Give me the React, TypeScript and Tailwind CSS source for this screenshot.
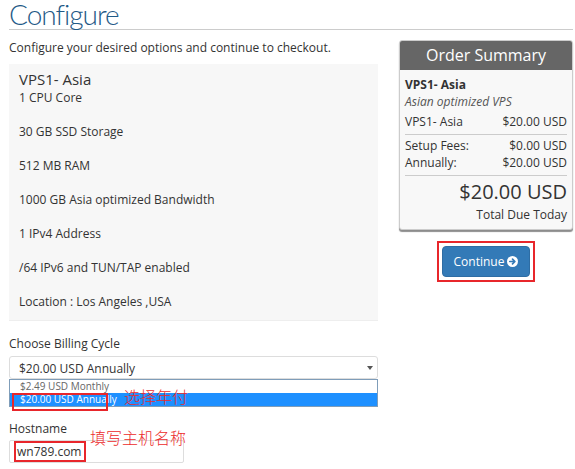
const features = [
  '1 CPU Core',
  '30 GB SSD Storage',
  '512 MB RAM',
  '1000 GB Asia optimized Bandwidth',
  '1 IPv4 Address',
  '/64 IPv6 and TUN/TAP enabled',
  'Location : Los Angeles ,USA',
];

function ArrowCircle() {
  return (
    <svg width="11" height="11" viewBox="0 0 16 16" className="inline-block">
      <circle cx="8" cy="8" r="8" fill="#fff" />
      <path d="M4 8h7M8 4.5 11.5 8 8 11.5" stroke="#337ab7" strokeWidth="2.4" fill="none" strokeLinecap="round" strokeLinejoin="round" />
    </svg>
  );
}

function Note({ children, className }: { children: React.ReactNode; className: string }) {
  return (
    <span
      className={`absolute whitespace-nowrap text-[16px] leading-[16px] font-light text-[#ec2b2b] ${className}`}
      style={{ fontFamily: '"Noto Sans CJK SC", sans-serif' }}
    >
      {children}
    </span>
  );
}

export default function App() {
  return (
    <div className="w-[575px] h-[469px] overflow-hidden bg-white pl-[9px] pr-[2px] text-[12px] leading-[17px] text-[#333]" style={{ fontFamily: '"Open Sans", sans-serif' }}>
      <h1
        className="text-[28px] leading-[28px] pb-[1px] border-b border-[#ccc] font-light text-[#1f5a87] tracking-[-1px]"
        style={{ fontFamily: 'Lato, sans-serif' }}
      >
        Configure
      </h1>

      <div className="flex items-start gap-[21px]">
        {/* left column */}
        <div className="w-[369px] pt-[9px]">
          <p>Configure your desired options and continue to checkout.</p>

          <div className="mt-[8px] bg-[#f7f7f7] border-b border-[#eee] pl-[10px] pt-[5px] pb-[10px]">
            <div className="text-[15px] leading-[20px]">VPS1- Asia</div>
            <div className="flex flex-col gap-[17px]">
              {features.map((f) => (
                <div key={f}>{f}</div>
              ))}
            </div>
          </div>

          <div className="mt-[14px]">Choose Billing Cycle</div>
          <div className="relative mt-[4px]">
            <div className="h-[23px] border border-[#ddd] rounded-[3px] flex items-center justify-between pl-[9px] pr-[4px] pt-[1px]">
              <span>$20.00 USD Annually</span>
              <svg width="6" height="4" viewBox="0 0 6 4">
                <polygon points="0,0 6,0 3,4" fill="#555" />
              </svg>
            </div>
            <div className="absolute left-0 right-0 top-full border border-[#7f9db9] bg-white text-[10px] leading-[13px]">
              <div className="pl-[10px] text-[#666]">$2.49 USD Monthly</div>
              <div className="pl-[10px] bg-[#1e90ff] text-white">$20.00 USD Annually</div>
            </div>
            <div className="absolute left-[3px] top-[37px] w-[96px] h-[18px] border-2 border-[#e8262b]" />
            <Note className="left-[115px] top-[32px]">选择年付</Note>
          </div>

          <div className="mt-[41px] relative">
            <div>Hostname</div>
            <div className="mt-[3px] w-[175px] h-[23px] border border-[#ddd] rounded-[2px] pl-[7px] leading-[21px]">
              wn789.com
            </div>
            <div className="absolute left-[5px] top-[21px] w-[72px] h-[21px] border-2 border-[#e8262b]" />
            <Note className="left-[81px] top-[9px]">填写主机名称</Note>
          </div>
        </div>

        {/* right column */}
        <div className="w-[174px] pt-[10px] flex flex-col items-center">
          <div className="w-full rounded-[3px] border border-[#ccc] shadow-[0_2px_1px_rgba(0,0,0,0.45)] overflow-hidden bg-[#f8f8f8]">
            <div className="h-[29px] bg-[#666] text-white text-[16px] leading-[29px] text-center">Order Summary</div>
            <div className="px-[5px] pt-[6px] pb-[6px]">
              <div className="font-bold">VPS1- Asia</div>
              <div className="italic text-[#555]">Asian optimized VPS</div>
              <div className="mt-[3px] flex justify-between">
                <span>VPS1- Asia</span>
                <span>$20.00 USD</span>
              </div>
              <div className="mt-[4px] border-t border-[#ccc]" />
              <div className="mt-[2px] flex justify-between">
                <span>Setup Fees:</span>
                <span>$0.00 USD</span>
              </div>
              <div className="flex justify-between">
                <span>Annually:</span>
                <span>$20.00 USD</span>
              </div>
              <div className="mt-[4px] border-t border-[#ccc]" />
              <div className="mt-[2px] text-right text-[20px] leading-[28px]">$20.00 USD</div>
              <div className="text-right">Total Due Today</div>
            </div>
          </div>

          <div className="mt-[11px] border-2 border-[#e8262b] p-[3px]">
            <button className="w-[88px] h-[31px] rounded-[4px] bg-[#337ab7] border border-[#2e6da4] text-white flex items-center justify-center gap-[3px]">
              <span>Continue</span>
              <ArrowCircle />
            </button>
          </div>
        </div>
      </div>
    </div>
  );
}
